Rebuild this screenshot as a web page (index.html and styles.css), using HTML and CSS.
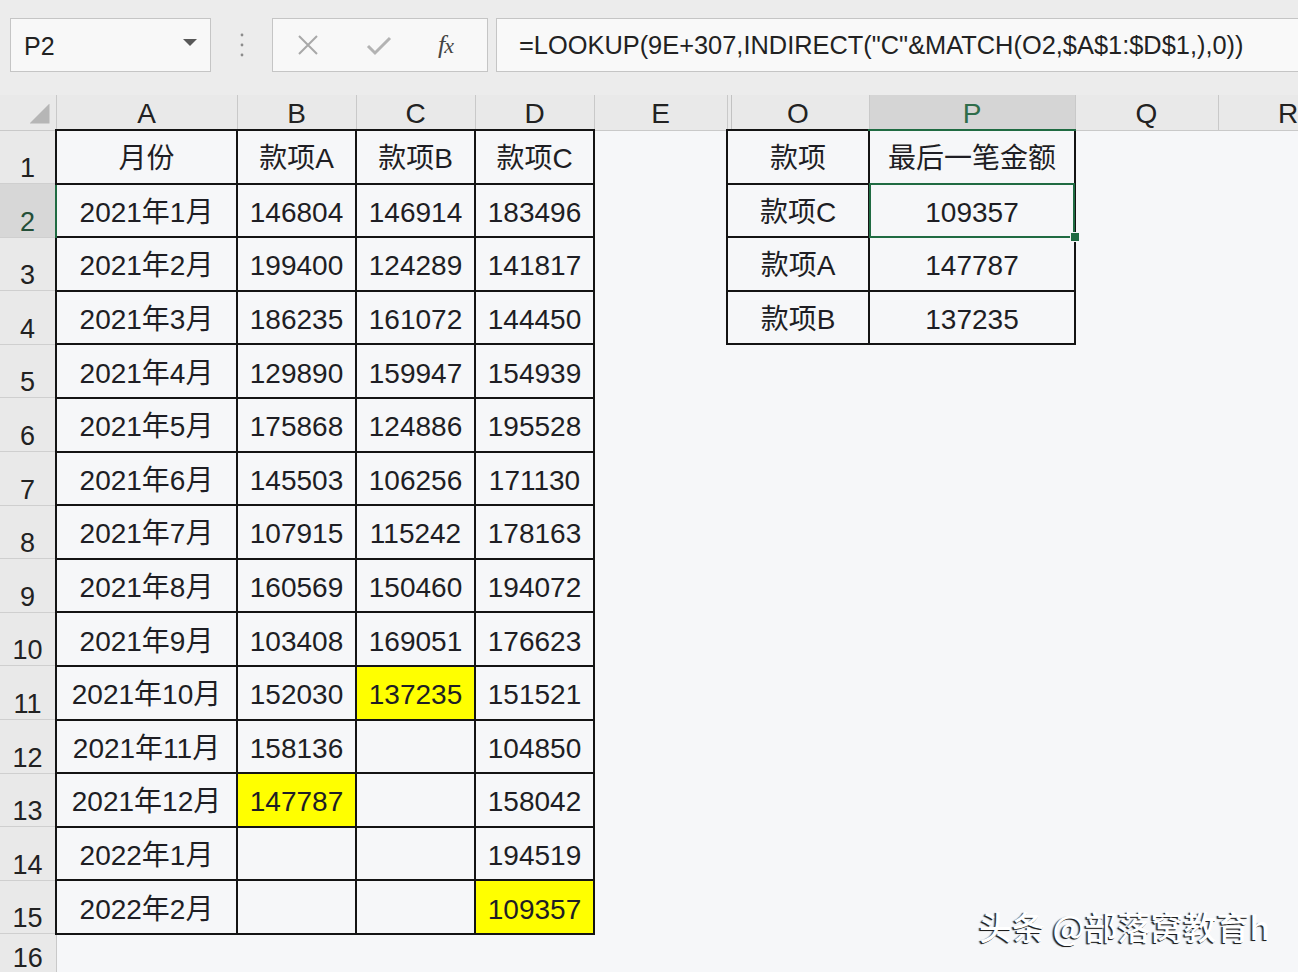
FILE: index.html
```html
<!DOCTYPE html>
<html lang="zh-CN">
<head>
<meta charset="utf-8">
<title>LOOKUP</title>
<link rel="stylesheet" href="styles.css">
</head>
<body>
<div class="app">
  <div class="toolbar">
    <div class="namebox"><span class="ref">P2</span><span class="arrow"></span></div>
    <div class="dots">
      <svg width="6" height="26" viewBox="0 0 6 26"><circle cx="3" cy="3" r="1.4" fill="#8c8c8c"/><circle cx="3" cy="13" r="1.4" fill="#8c8c8c"/><circle cx="3" cy="23" r="1.4" fill="#8c8c8c"/></svg>
    </div>
    <div class="fxbox">
      <svg class="ic-x" width="22" height="22" viewBox="0 0 22 22"><path d="M2 2 L20 20 M20 2 L2 20" stroke="#a8a8a8" stroke-width="2" fill="none"/></svg>
      <svg class="ic-ok" width="26" height="22" viewBox="0 0 26 22"><path d="M2 12 L9 19 L24 4" stroke="#b3b3b3" stroke-width="3" fill="none"/></svg>
      <span class="fx">f<span class="fx-x">x</span></span>
    </div>
    <div class="formula">=LOOKUP(9E+307,INDIRECT("C"&amp;MATCH(O2,$A$1:$D$1,),0))</div>
  </div>

  <table class="sheet">
    <colgroup>
      <col class="w-hdr"><col class="w-a"><col class="w-b"><col class="w-c"><col class="w-d"><col class="w-e"><col class="w-o"><col class="w-p"><col class="w-q"><col class="w-r">
    </colgroup>
    <thead>
      <tr class="colhdr">
        <th class="corner"><span class="tri"></span></th>
        <th>A</th><th>B</th><th>C</th><th>D</th><th class="ch-e">E</th><th class="ch-o">O</th><th class="ch-p">P</th><th>Q</th><th>R</th>
      </tr>
    </thead>
    <tbody>
      <tr class="row"><th class="rh">1</th><td class="b">月份</td><td class="b">款项A</td><td class="b">款项B</td><td class="b">款项C</td><td></td><td class="b">款项</td><td class="b">最后一笔金额</td><td></td><td></td></tr>
      <tr class="row"><th class="rh rh-sel">2</th><td class="b">2021年1月</td><td class="b">146804</td><td class="b">146914</td><td class="b">183496</td><td></td><td class="b">款项C</td><td class="b sel">109357<span class="handle"></span></td><td></td><td></td></tr>
      <tr class="row"><th class="rh">3</th><td class="b">2021年2月</td><td class="b">199400</td><td class="b">124289</td><td class="b">141817</td><td></td><td class="b">款项A</td><td class="b">147787</td><td></td><td></td></tr>
      <tr class="row"><th class="rh">4</th><td class="b">2021年3月</td><td class="b">186235</td><td class="b">161072</td><td class="b">144450</td><td></td><td class="b">款项B</td><td class="b">137235</td><td></td><td></td></tr>
      <tr class="row"><th class="rh">5</th><td class="b">2021年4月</td><td class="b">129890</td><td class="b">159947</td><td class="b">154939</td><td></td><td></td><td></td><td></td><td></td></tr>
      <tr class="row"><th class="rh">6</th><td class="b">2021年5月</td><td class="b">175868</td><td class="b">124886</td><td class="b">195528</td><td></td><td></td><td></td><td></td><td></td></tr>
      <tr class="row"><th class="rh">7</th><td class="b">2021年6月</td><td class="b">145503</td><td class="b">106256</td><td class="b">171130</td><td></td><td></td><td></td><td></td><td></td></tr>
      <tr class="row"><th class="rh">8</th><td class="b">2021年7月</td><td class="b">107915</td><td class="b">115242</td><td class="b">178163</td><td></td><td></td><td></td><td></td><td></td></tr>
      <tr class="row"><th class="rh">9</th><td class="b">2021年8月</td><td class="b">160569</td><td class="b">150460</td><td class="b">194072</td><td></td><td></td><td></td><td></td><td></td></tr>
      <tr class="row"><th class="rh">10</th><td class="b">2021年9月</td><td class="b">103408</td><td class="b">169051</td><td class="b">176623</td><td></td><td></td><td></td><td></td><td></td></tr>
      <tr class="row"><th class="rh">11</th><td class="b">2021年10月</td><td class="b">152030</td><td class="b hl">137235</td><td class="b">151521</td><td></td><td></td><td></td><td></td><td></td></tr>
      <tr class="row"><th class="rh">12</th><td class="b">2021年11月</td><td class="b">158136</td><td class="b"></td><td class="b">104850</td><td></td><td></td><td></td><td></td><td></td></tr>
      <tr class="row"><th class="rh">13</th><td class="b">2021年12月</td><td class="b hl">147787</td><td class="b"></td><td class="b">158042</td><td></td><td></td><td></td><td></td><td></td></tr>
      <tr class="row"><th class="rh">14</th><td class="b">2022年1月</td><td class="b"></td><td class="b"></td><td class="b">194519</td><td></td><td></td><td></td><td></td><td></td></tr>
      <tr class="row"><th class="rh">15</th><td class="b">2022年2月</td><td class="b"></td><td class="b"></td><td class="b hl">109357</td><td></td><td></td><td></td><td></td><td></td></tr>
      <tr class="row last"><th class="rh">16</th><td></td><td></td><td></td><td></td><td></td><td></td><td></td><td></td><td></td></tr>
    </tbody>
  </table>

  <div class="watermark">头条 @部落窝教育h</div>
</div>
</body>
</html>
```

FILE: styles.css
```css
html, body {
  margin: 0;
  padding: 0;
  background: #f6f7f9;
  overflow: hidden;
}

.app {
  position: relative;
  width: 1298px;
  height: 972px;
  overflow: hidden;
  font-family: "Liberation Sans", "Noto Sans CJK SC", sans-serif;
  color: #222;
}

/* ---------- toolbar ---------- */
.toolbar {
  height: 95px;
  box-sizing: border-box;
  padding-top: 18px;
  display: flex;
  align-items: flex-start;
  background: #ececec;
}

.namebox {
  margin-left: 10px;
  width: 201px;
  height: 54px;
  box-sizing: border-box;
  border: 1px solid #c5c5c5;
  background: #f8f8f8;
  display: flex;
  align-items: center;
  justify-content: space-between;
  padding: 0 13px 0 13px;
}

.ref {
  font-size: 25px;
  color: #222;
  padding-top: 2px;
}

.arrow {
  width: 0;
  height: 0;
  border-left: 7px solid transparent;
  border-right: 7px solid transparent;
  border-top: 7px solid #585858;
  margin-top: -6px;
}

.dots {
  width: 61px;
  height: 54px;
  display: flex;
  align-items: center;
  justify-content: center;
}

.fxbox {
  width: 216px;
  height: 54px;
  box-sizing: border-box;
  border: 1px solid #c5c5c5;
  background: #f8f8f8;
  display: flex;
  align-items: center;
  padding-left: 24px;
}

.ic-x { margin-right: 47px; }
.ic-ok { margin-right: 46px; }

.fx {
  font-family: "Liberation Serif", "DejaVu Serif", serif;
  font-style: italic;
  font-size: 26px;
  color: #444;
  letter-spacing: -1px;
}

.fx-x {
  font-size: 22px;
}

.formula {
  margin-left: 8px;
  flex: 1;
  height: 54px;
  box-sizing: border-box;
  border: 1px solid #c5c5c5;
  border-right: none;
  background: #f9f9f9;
  font-size: 25.4px;
  line-height: 52px;
  padding-left: 22px;
  white-space: nowrap;
  color: #222;
}

/* ---------- sheet ---------- */
.sheet {
  table-layout: fixed;
  border-collapse: collapse;
  width: 1358px;
}

.w-hdr { width: 56px; }
.w-a { width: 181px; }
.w-b { width: 119px; }
.w-c { width: 119px; }
.w-d { width: 119px; }
.w-e { width: 133px; }
.w-o { width: 142px; }
.w-p { width: 206px; }
.w-q { width: 143px; }
.w-r { width: 140px; }

.colhdr {
  height: 35px;
}

.colhdr th {
  background: #e9e9e9;
  font-weight: normal;
  font-size: 28px;
  line-height: 1;
  color: #222;
  padding: 3px 0 0 0;
  border-right: 1px solid #c9c9c9;
  border-bottom: 1px solid #c9c9c9;
  text-align: center;
  vertical-align: middle;
}

.colhdr th.corner {
  text-align: right;
  vertical-align: bottom;
  padding: 0 6px 6px 0;
}

.tri {
  display: inline-block;
  width: 20px;
  height: 20px;
  background: #b6b6b6;
  clip-path: polygon(100% 0, 100% 100%, 0 100%);
  vertical-align: bottom;
}

.colhdr th.ch-o {
  box-shadow: inset 3px 0 0 #e9e9e9, inset 4px 0 0 #c2c2c2;
}

.colhdr th.ch-p {
  background: #d5d5d5;
  color: #2f6d4a;
  border-bottom: 2px solid #1f6b42;
}

.row {
  height: 53.6px;
}

.row.last {
  height: 40px;
}

.rh {
  background: #e9e9e9;
  font-weight: normal;
  font-size: 27px;
  line-height: 1;
  color: #222;
  text-align: center;
  vertical-align: bottom;
  padding: 0 0 1px 0;
  border-right: 1px solid #c9c9c9;
  border-bottom: 1px solid #cfcfcf;
}

.rh.rh-sel {
  background: #d7d7d7;
  color: #244f38;
  border-right: 2px solid #1f6b42;
}

td {
  padding: 5px 0 0 0;
  text-align: center;
  vertical-align: middle;
  font-size: 28px;
  line-height: 1;
  color: #1e1e24;
  white-space: nowrap;
  overflow: visible;
}

td.b {
  border: 2px solid #141414;
}

td.hl {
  background: #ffff00;
}

td.sel {
  position: relative;
}

td.sel::after {
  content: "";
  position: absolute;
  left: -1px;
  right: -1px;
  top: -2px;
  bottom: -2px;
  border: 2px solid #1f6b42;
  pointer-events: none;
}

.handle {
  position: absolute;
  right: -6px;
  bottom: -6px;
  width: 8px;
  height: 8px;
  background: #1f6b42;
  border: 1px solid #f6f7f9;
  z-index: 2;
}

/* ---------- watermark ---------- */
.watermark {
  position: absolute;
  left: 979px;
  top: 907px;
  font-family: "Noto Sans CJK SC", sans-serif;
  font-size: 33px;
  font-weight: 500;
  line-height: 1.2;
  color: #ffffff;
  text-shadow: -1px 1px 0 #1e1e1e, -2px 1px 1px rgba(0, 0, 0, 0.6);
  white-space: nowrap;
}
```
